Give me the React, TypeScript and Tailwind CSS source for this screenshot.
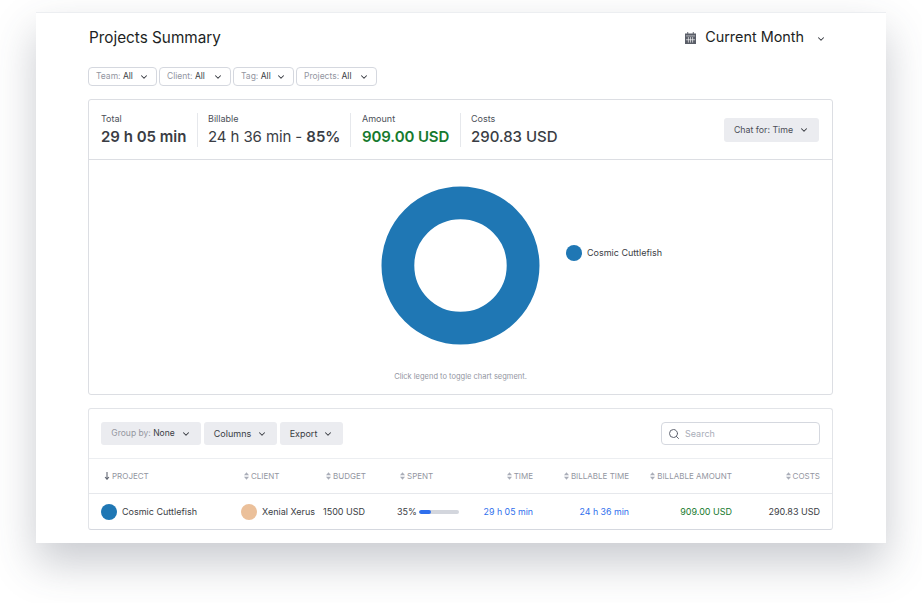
import { ChevronDown, Search } from 'lucide-react';

const filters = [
  { label: 'Team:', w: 'w-[69px]' },
  { label: 'Client:', w: 'w-[72px]' },
  { label: 'Tag:', w: 'w-[61px]' },
  { label: 'Projects:', w: 'w-[81px]' },
];

const gridCols = 'grid grid-cols-[140px_82px_74px_66px_70px_96px_103px_88px] items-center';

function SortIcon() {
  return (
    <svg viewBox="0 0 6 9" className="w-[5px] h-[8px] mr-[2px] shrink-0 text-[#a9adb8]" fill="currentColor">
      <path d="M3 0 L6 3.6 H0 Z" />
      <path d="M3 9 L0 5.4 H6 Z" />
    </svg>
  );
}

function DownArrow() {
  return (
    <svg viewBox="0 0 6 9" className="w-[6px] h-[8px] mr-[2px] shrink-0 text-[#5f6470]" fill="none" stroke="currentColor">
      <path d="M3 0 V8 M0.8 5.6 L3 8.2 L5.2 5.6" strokeWidth="1.2" />
    </svg>
  );
}

function HeadCell({ label, right }: { label: string; right?: boolean }) {
  return (
    <div className={`flex items-center text-[8px] text-[#93969f] ${right ? 'justify-end' : 'pl-[3px]'}`}>
      <SortIcon />
      {label}
    </div>
  );
}

function Stat({ label, children, className }: { label: string; children: React.ReactNode; className: string }) {
  return (
    <div className={`flex flex-col ${className}`}>
      <span className="text-[9px] leading-[12px] text-[#4b4f58]">{label}</span>
      <span className="text-[15px] leading-[22px] mt-[1px] whitespace-nowrap">{children}</span>
    </div>
  );
}

export default function App() {
  return (
    <div className="w-[922px] h-[603px] overflow-hidden bg-white pt-3 pl-9 font-['Inter',sans-serif] text-[#3a3d44]">
      <div className="w-[850px] h-[531px] bg-white pl-[52px] pr-[53px] border-t border-[#eceef1] shadow-[0_20px_40px_rgba(60,68,85,0.28)]">
        <div className="flex justify-between h-[54px]">
          <h1 className="text-[15.3px] leading-[20px] mt-[15px] ml-[1px] text-[#1d1f24]">Projects Summary</h1>
          <div className="flex items-start mt-[14px] mr-[7px]">
            <svg viewBox="0 0 12 13" className="w-[11px] h-[12px] mt-[5px] mr-[9px] text-[#5a5e68]" fill="currentColor">
              <path d="M2.5 0h1v1.5h5V0h1v1.5H12V13H0V1.5h2.5z" />
              <path d="M1 4.2h10" stroke="#fff" strokeWidth="0.6" />
              <path d="M3.7 5.5v6M6 5.5v6M8.3 5.5v6M1 8.4h10" stroke="#fff" strokeWidth="0.7" />
            </svg>
            <span className="text-[14.4px] leading-[20px] text-[#1d1f24]">Current Month</span>
            <ChevronDown className="w-[10px] h-[10px] ml-[12px] mt-[7px] text-[#33363d]" strokeWidth={2.5} />
          </div>
        </div>

        <div className="flex gap-[2px] h-[19px]">
          {filters.map((f) => (
            <div
              key={f.label}
              className={`${f.w} flex items-center justify-between px-[7px] border border-[#d5d8df] rounded-[4px] text-[8.5px] text-[#93969f]`}
            >
              <span className="whitespace-nowrap">
                {f.label} <span className="text-[#3a3d44]">All</span>
              </span>
              <ChevronDown className="w-[10px] h-[10px] text-[#33363d]" strokeWidth={2.5} />
            </div>
          ))}
        </div>

        <div className="mt-[13px] h-[296px] border border-[#dcdee3] rounded-[3px] flex flex-col">
          <div className="h-[60px] flex items-center border-b border-[#dcdee3] pl-[12px] pr-[13px]">
            <Stat label="Total" className="w-[97px] h-[34px] border-r border-[#e6e8ec]">
              <span className="font-semibold">29 h 05 min</span>
            </Stat>
            <Stat label="Billable" className="w-[153px] h-[34px] pl-[10px] border-r border-[#e6e8ec]">
              <span className="tracking-[-0.1px]">24 h 36 min - </span>
              <span className="font-semibold">85%</span>
            </Stat>
            <Stat label="Amount" className="w-[110px] h-[34px] pl-[11px] border-r border-[#e6e8ec]">
              <span className="font-semibold text-[#167a2e] tracking-[-0.1px]">909.00 USD</span>
            </Stat>
            <Stat label="Costs" className="w-[120px] h-[34px] pl-[10px]">
              <span className="font-medium">290.83 USD</span>
            </Stat>
            <div className="ml-auto w-[95px] h-[24px] flex items-center justify-center gap-[6px] bg-[#ebecf0] rounded-[3px] text-[8.8px] text-[#4b4f58]">
              Chat for: Time
              <ChevronDown className="w-[10px] h-[10px] text-[#33363d]" strokeWidth={2.5} />
            </div>
          </div>

          <div className="flex-1 flex flex-col">
            <div className="flex pt-[26px] pl-[292px]">
              <svg viewBox="0 0 160 160" className="w-[159px] h-[159px] shrink-0">
                <circle cx="80" cy="80" r="63" fill="none" stroke="#1f77b4" strokeWidth="33" />
              </svg>
              <div className="flex items-center ml-[26px] mt-[58px] h-[17px]">
                <span className="w-[16px] h-[16px] rounded-full bg-[#1f77b4]" />
                <span className="ml-[5px] text-[9px] whitespace-nowrap">Cosmic Cuttlefish</span>
              </div>
            </div>
            <p className="mt-[27px] text-center text-[7.5px] leading-[10px] text-[#93969f]">
              Click legend to toggle chart segment.
            </p>
          </div>
        </div>

        <div className="mt-[13px] h-[122px] border border-[#e2e4e8] border-b-[#d5d8df] rounded-[3px] flex flex-col">
          <div className="h-[50px] shrink-0 flex items-center border-b border-[#eceef1] px-[12px]">
            <div className="flex gap-[3px] text-[9px]">
              <div className="w-[100px] h-[23px] flex items-center justify-center gap-[6px] bg-[#ebecf0] rounded-[3px] text-[8.5px] text-[#93969f]">
                <span>
                  Group by: <span className="text-[#3a3d44]">None</span>
                </span>
                <ChevronDown className="w-[10px] h-[10px] text-[#33363d]" strokeWidth={2.5} />
              </div>
              <div className="w-[73px] h-[23px] flex items-center justify-center gap-[6px] bg-[#ebecf0] rounded-[3px]">
                Columns
                <ChevronDown className="w-[10px] h-[10px]" strokeWidth={2.5} />
              </div>
              <div className="w-[63px] h-[23px] flex items-center justify-center gap-[6px] bg-[#ebecf0] rounded-[3px]">
                Export
                <ChevronDown className="w-[10px] h-[10px]" strokeWidth={2.5} />
              </div>
            </div>
            <div className="ml-auto w-[159px] h-[23px] flex items-center pl-[6px] border border-[#d5d8df] rounded-[4px] text-[9px] text-[#a9adb8]">
              <Search className="w-[12px] h-[12px] mr-[5px] text-[#5f6470]" strokeWidth={2} />
              Search
            </div>
          </div>

          <div className={`${gridCols} h-[35px] shrink-0 border-b border-[#e6e8ec] px-[12px]`}>
            <div className="flex items-center pl-[3px] text-[8px] text-[#93969f]">
              <DownArrow />
              PROJECT
            </div>
            <HeadCell label="CLIENT" />
            <HeadCell label="BUDGET" />
            <HeadCell label="SPENT" />
            <HeadCell label="TIME" right />
            <HeadCell label="BILLABLE TIME" right />
            <HeadCell label="BILLABLE AMOUNT" right />
            <HeadCell label="COSTS" right />
          </div>

          <div className={`${gridCols} flex-1 px-[12px] text-[9px] whitespace-nowrap`}>
            <div className="flex items-center gap-[5px]">
              <span className="w-[16px] h-[16px] rounded-full bg-[#1f77b4]" />
              Cosmic Cuttlefish
            </div>
            <div className="flex items-center gap-[5px]">
              <span className="w-[16px] h-[16px] rounded-full bg-[#ebc09a]" />
              Xenial Xerus
            </div>
            <div>1500 USD</div>
            <div className="flex items-center gap-[2px]">
              35%
              <div className="w-[40px] h-[4px] rounded-full bg-[#d3d6dd] overflow-hidden shrink-0">
                <div className="h-full bg-[#2f6fed] rounded-full" style={{ width: '30%' }} />
              </div>
            </div>
            <div className="text-right text-[8.8px] text-[#2f6fed]">29 h 05 min</div>
            <div className="text-right text-[8.8px] text-[#2f6fed]">24 h 36 min</div>
            <div className="text-right text-[#167a2e]">909.00 USD</div>
            <div className="text-right">290.83 USD</div>
          </div>
        </div>
      </div>
    </div>
  );
}
